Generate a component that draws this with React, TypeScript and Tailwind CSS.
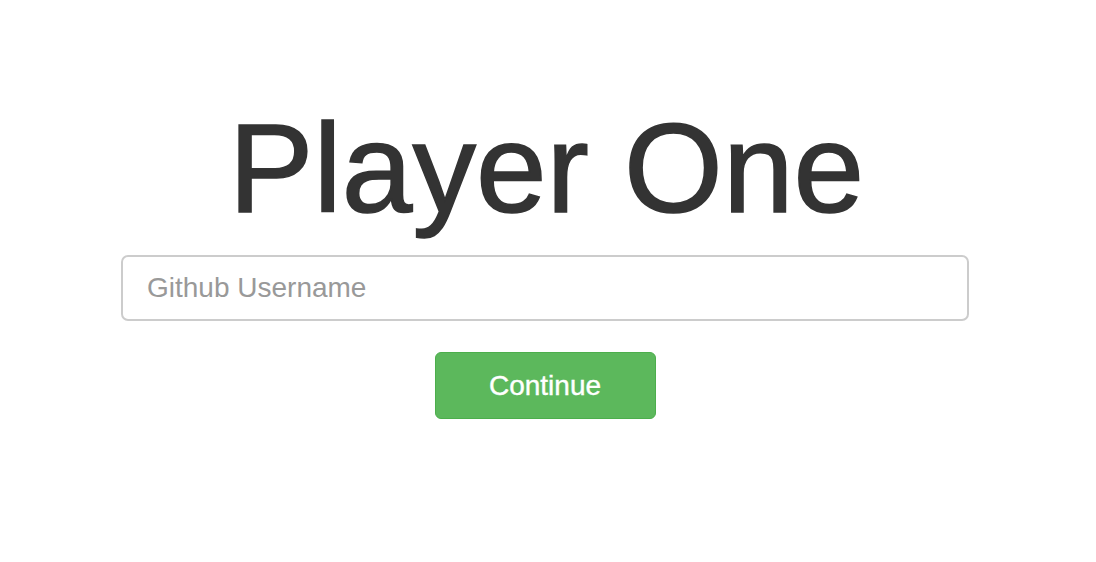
import React from "react";

export default function App() {
  return (
    <div className="min-h-[562px] w-full bg-white" style={{ fontFamily: '"Liberation Sans", Arial, sans-serif' }}>
      <div className="ml-[121px] flex w-[848px] flex-col items-center pt-[105px]">
        <h1 className="ml-[3px] text-[127px] leading-none font-normal text-[#333333] [-webkit-text-stroke:1.6px_#333333]">Player One</h1>
        <input
          type="text"
          placeholder="Github Username"
          className="mt-[23px] h-[66px] w-full rounded-[7px] border-2 border-[#cccccc] bg-white px-[24px] text-[28px] text-[#555] placeholder:text-[#999999] outline-none"
        />
        <button
          type="button"
          className="mt-[31px] h-[67px] w-[221px] rounded-[6px] border border-[#4cae4c] bg-[#5cb85c] text-[28px] text-white [-webkit-text-stroke:0.4px_#ffffff]"
        >
          Continue
        </button>
      </div>
    </div>
  );
}
